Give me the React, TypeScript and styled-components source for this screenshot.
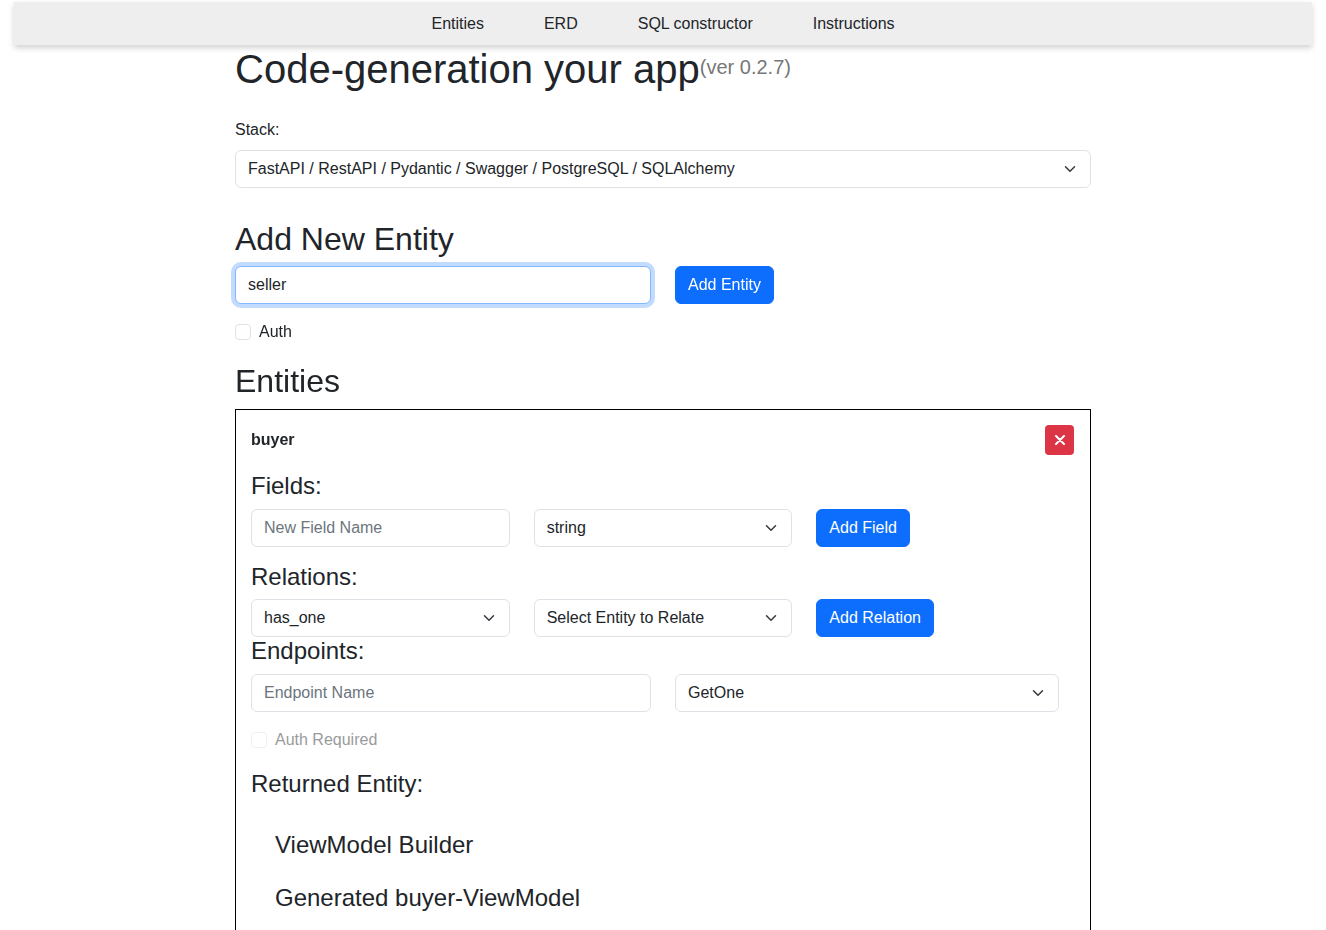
import React from 'react';
import styled, { createGlobalStyle, css } from 'styled-components';

const GlobalStyle = createGlobalStyle`
  * { box-sizing: border-box; }
  body {
    margin: 0;
    background: #fff;
    color: #212529;
    font-family: "Liberation Sans", Arial, sans-serif;
    font-size: 16px;
    line-height: 1.5;
  }
`;

const NavBar = styled.nav`
  margin: 2px 14px 0;
  height: 43px;
  background: #eeeeee;
  box-shadow: 0 3px 6px rgba(0, 0, 0, 0.18);
  display: flex;
  justify-content: center;
  align-items: center;
  gap: 60px;
`;

const NavLink = styled.a`
  color: #212529;
  text-decoration: none;
  font-size: 16px;
`;

const Container = styled.main`
  width: 856px;
  margin: 0 auto;
`;

const Title = styled.h1`
  margin: 0 0 25px;
  font-size: 40px;
  font-weight: 400;
  line-height: 48px;
`;

const Version = styled.sup`
  font-size: 20px;
  color: #777;
  vertical-align: top;
  position: relative;
  top: -2px;
`;

const Label = styled.label`
  display: block;
  margin-bottom: 8px;
  font-size: 16px;
`;

const Heading = styled.h2<{ $top?: number; $bottom?: number }>`
  margin: ${({ $top = 0 }) => $top}px 0 ${({ $bottom = 8 }) => $bottom}px;
  font-size: 32px;
  font-weight: 400;
  line-height: 38px;
`;

const SubHeading = styled.h4<{ $top?: number; $bottom?: number; $indent?: number }>`
  margin: ${({ $top = 0 }) => $top}px 0 ${({ $bottom = 8 }) => $bottom}px
    ${({ $indent = 0 }) => $indent}px;
  font-size: 24px;
  font-weight: 400;
  line-height: 29px;
`;

const fieldBase = css`
  display: block;
  width: 100%;
  height: 38px;
  padding: 6px 12px;
  font-family: inherit;
  font-size: 16px;
  line-height: 24px;
  color: #212529;
  background: #fff;
  border: 1px solid #dee2e6;
  border-radius: 6px;
  outline: none;
`;

const TextInput = styled.input<{ $focused?: boolean }>`
  ${fieldBase}
  &::placeholder { color: #6c757d; }
  ${({ $focused }) =>
    $focused &&
    css`
      border-color: #86b7fe;
      box-shadow: 0 0 0 4px rgba(13, 110, 253, 0.25);
    `}
`;

const SelectWrap = styled.div<{ $trim?: number }>`
  position: relative;
  width: calc(100% - ${({ $trim = 0 }) => $trim}px);
`;

const Select = styled.select`
  ${fieldBase}
  appearance: none;
  padding-right: 36px;
`;

const Chevron = styled.svg`
  position: absolute;
  right: 15px;
  top: 13px;
  pointer-events: none;
`;

const Button = styled.button`
  height: 38px;
  padding: 6px 12px;
  font-family: inherit;
  font-size: 16px;
  line-height: 24px;
  color: #fff;
  background: #0d6efd;
  border: 1px solid #0d6efd;
  border-radius: 6px;
  justify-self: start;
  white-space: nowrap;
`;

const Grid = styled.div<{ $cols: number }>`
  display: grid;
  grid-template-columns: repeat(${({ $cols }) => $cols}, 1fr);
  column-gap: 24px;
  align-items: center;
`;

const CheckRow = styled.label<{ $disabled?: boolean; $top?: number }>`
  display: flex;
  align-items: center;
  gap: 8px;
  margin-top: ${({ $top = 0 }) => $top}px;
  height: 24px;
  color: ${({ $disabled }) => ($disabled ? '#9a9b9c' : '#212529')};
`;

const Checkbox = styled.input<{ $disabled?: boolean }>`
  appearance: none;
  margin: 0;
  width: 16px;
  height: 16px;
  border: 1px solid #dee2e6;
  border-radius: 4px;
  background: #fff;
  opacity: ${({ $disabled }) => ($disabled ? 0.5 : 1)};
`;

const Card = styled.section`
  border: 1px solid #000;
  padding: 15px 15px 30px;
  min-height: 560px;
`;

const CardHeader = styled.div`
  display: flex;
  justify-content: space-between;
  align-items: center;
  height: 30px;
  margin-bottom: 16px;
`;

const EntityName = styled.strong`
  font-size: 16px;
  font-weight: 700;
`;

const DeleteButton = styled.button`
  width: 29px;
  height: 30px;
  margin-right: 1px;
  padding: 0;
  border: none;
  border-radius: 4px;
  background: #dc3545;
  display: flex;
  align-items: center;
  justify-content: center;
`;

const Chev = () => (
  <Chevron width="12" height="12" viewBox="0 0 16 16">
    <path d="M2 5l6 6 6-6" fill="none" stroke="#343a40" strokeWidth="2" strokeLinecap="round" strokeLinejoin="round" />
  </Chevron>
);

const Dropdown = ({ value, trim }: { value: string; trim?: number }) => (
  <SelectWrap $trim={trim}>
    <Select defaultValue={value}>
      <option>{value}</option>
    </Select>
    <Chev />
  </SelectWrap>
);

export default function App() {
  return (
    <>
      <GlobalStyle />
      <NavBar>
        <NavLink href="#">Entities</NavLink>
        <NavLink href="#">ERD</NavLink>
        <NavLink href="#">SQL constructor</NavLink>
        <NavLink href="#">Instructions</NavLink>
      </NavBar>
      <Container>
        <Title>
          Code-generation your app<Version>(ver 0.2.7)</Version>
        </Title>
        <Label>Stack:</Label>
        <Dropdown value="FastAPI / RestAPI / Pydantic / Swagger / PostgreSQL / SQLAlchemy" />

        <Heading $top={32}>Add New Entity</Heading>
        <Grid $cols={2}>
          <TextInput $focused defaultValue="seller" autoFocus />
          <Button>Add Entity</Button>
        </Grid>
        <CheckRow $top={16}>
          <Checkbox type="checkbox" />
          Auth
        </CheckRow>

        <Heading $top={18} $bottom={9}>Entities</Heading>
        <Card>
          <CardHeader>
            <EntityName>buyer</EntityName>
            <DeleteButton aria-label="Delete">
              <svg width="10" height="10" viewBox="0 0 10 10">
                <path d="M1 1l8 8M9 1L1 9" stroke="#fff" strokeWidth="2" strokeLinecap="round" />
              </svg>
            </DeleteButton>
          </CardHeader>

          <SubHeading $bottom={9}>Fields:</SubHeading>
          <Grid $cols={3}>
            <TextInput placeholder="New Field Name" />
            <Dropdown value="string" />
            <Button>Add Field</Button>
          </Grid>

          <SubHeading $top={15}>Relations:</SubHeading>
          <Grid $cols={3}>
            <Dropdown value="has_one" />
            <Dropdown value="Select Entity to Relate" />
            <Button>Add Relation</Button>
          </Grid>

          <SubHeading $top={-1} $bottom={9}>Endpoints:</SubHeading>
          <Grid $cols={2}>
            <TextInput placeholder="Endpoint Name" />
            <Dropdown value="GetOne" trim={16} />
          </Grid>
          <CheckRow $disabled $top={16}>
            <Checkbox type="checkbox" disabled $disabled />
            Auth Required
          </CheckRow>

          <SubHeading $top={17} $bottom={32}>Returned Entity:</SubHeading>
          <SubHeading $indent={24} $bottom={24}>ViewModel Builder</SubHeading>
          <SubHeading $indent={24}>Generated buyer-ViewModel</SubHeading>
        </Card>
      </Container>
    </>
  );
}
